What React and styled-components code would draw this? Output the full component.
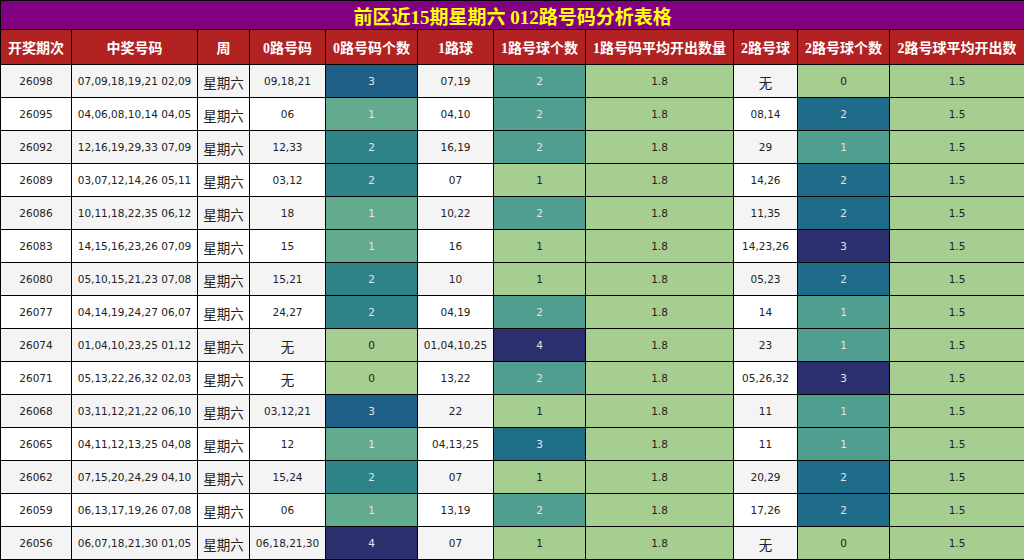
import React from 'react';
import styled, { createGlobalStyle } from 'styled-components';

const GlobalStyle = createGlobalStyle`
    body {
        margin: 0;
        background: #ffffff;
        font-family: "DejaVu Sans", "Noto Sans CJK SC", sans-serif;
    }
`;

const Table = styled.table`
    width: 1024px;
    table-layout: fixed;
    border-collapse: collapse;
    font-size: 10.5px;
    color: #222;
`;

const TitleCell = styled.th`
    height: 28px;
    padding: 0;
    border: 1px solid #000;
    background: #800080;
    color: #ffff00;
    font-family: "Liberation Serif", "Noto Sans CJK SC", serif;
    font-size: 19px;
    font-weight: bold;
    text-align: center;
    vertical-align: middle;
`;

const HeadCell = styled.th`
    height: 34px;
    padding: 0;
    border: 1px solid #000;
    background: #b22222;
    color: #ffffff;
    font-family: "Liberation Serif", "Noto Sans CJK SC", serif;
    font-size: 14px;
    font-weight: bold;
    white-space: nowrap;
    text-align: center;
`;

const Cell = styled.td`
    height: ${(p) => (p.$cjk ? '29px' : '32px')};
    padding: ${(p) => (p.$cjk ? '3px 0 0' : '0')};
    border: 1px solid #000;
    background: ${(p) => p.$bg || (p.$odd ? '#f4f4f4' : '#ffffff')};
    color: ${(p) => (p.$light ? '#e4e4e4' : '#222')};
    font-family: ${(p) => (p.$cjk ? '"Noto Sans CJK SC", sans-serif' : '"DejaVu Sans", sans-serif')};
    font-size: ${(p) => (p.$cjk ? '13.5px' : '10.5px')};
    line-height: 1.2;
    text-align: center;
    vertical-align: middle;
    white-space: nowrap;
`;

const widths = [71, 126, 52, 76, 92, 76, 92, 148, 64, 92, 135];

const headers = [
    '开奖期次', '中奖号码', '周', '0路号码', '0路号码个数', '1路球',
    '1路号球个数', '1路号码平均开出数量', '2路号球', '2路号球个数', '2路号球平均开出数',
];

const GREEN = '#a6ce91';

// colour scales, min -> max, per column
const scale0 = { 0: GREEN, 1: '#63ab8f', 2: '#2e8389', 3: '#1f5e87', 4: '#2c2f6e' };
const scale1 = { 1: GREEN, 2: '#509e8f', 3: '#1f6e88', 4: '#2c2f6e' };
const scale2 = { 0: GREEN, 1: '#509e8f', 2: '#1f6b8a', 3: '#2c2f6e' };

const rows = [
    ['26098', '07,09,18,19,21 02,09', '09,18,21', 3, '07,19', 2, '无', 0],
    ['26095', '04,06,08,10,14 04,05', '06', 1, '04,10', 2, '08,14', 2],
    ['26092', '12,16,19,29,33 07,09', '12,33', 2, '16,19', 2, '29', 1],
    ['26089', '03,07,12,14,26 05,11', '03,12', 2, '07', 1, '14,26', 2],
    ['26086', '10,11,18,22,35 06,12', '18', 1, '10,22', 2, '11,35', 2],
    ['26083', '14,15,16,23,26 07,09', '15', 1, '16', 1, '14,23,26', 3],
    ['26080', '05,10,15,21,23 07,08', '15,21', 2, '10', 1, '05,23', 2],
    ['26077', '04,14,19,24,27 06,07', '24,27', 2, '04,19', 2, '14', 1],
    ['26074', '01,04,10,23,25 01,12', '无', 0, '01,04,10,25', 4, '23', 1],
    ['26071', '05,13,22,26,32 02,03', '无', 0, '13,22', 2, '05,26,32', 3],
    ['26068', '03,11,12,21,22 06,10', '03,12,21', 3, '22', 1, '11', 1],
    ['26065', '04,11,12,13,25 04,08', '12', 1, '04,13,25', 3, '11', 1],
    ['26062', '07,15,20,24,29 04,10', '15,24', 2, '07', 1, '20,29', 2],
    ['26059', '06,13,17,19,26 07,08', '06', 1, '13,19', 2, '17,26', 2],
    ['26056', '06,07,18,21,30 01,05', '06,18,21,30', 4, '07', 1, '无', 0],
];

function CountCell({ value, scale }) {
    const bg = scale[value];
    return (
        <Cell $bg={bg} $light={bg !== GREEN}>
            {value}
        </Cell>
    );
}

function Balls({ value, odd }) {
    return (
        <Cell $odd={odd} $cjk={value === '无'}>
            {value}
        </Cell>
    );
}

export default function App() {
    return (
        <>
            <GlobalStyle />
            <Table>
                <colgroup>
                    {widths.map((w, i) => (
                        <col key={i} style={{ width: w }} />
                    ))}
                </colgroup>
                <thead>
                    <tr>
                        <TitleCell colSpan={11}>前区近15期星期六 012路号码分析表格</TitleCell>
                    </tr>
                    <tr>
                        {headers.map((h) => (
                            <HeadCell key={h}>{h}</HeadCell>
                        ))}
                    </tr>
                </thead>
                <tbody>
                    {rows.map((r, i) => {
                        const odd = i % 2 === 0;
                        return (
                            <tr key={r[0]}>
                                <Cell $odd={odd}>{r[0]}</Cell>
                                <Cell $odd={odd}>{r[1]}</Cell>
                                <Cell $odd={odd} $cjk>星期六</Cell>
                                <Balls value={r[2]} odd={odd} />
                                <CountCell value={r[3]} scale={scale0} />
                                <Balls value={r[4]} odd={odd} />
                                <CountCell value={r[5]} scale={scale1} />
                                <Cell $bg={GREEN}>1.8</Cell>
                                <Balls value={r[6]} odd={odd} />
                                <CountCell value={r[7]} scale={scale2} />
                                <Cell $bg={GREEN}>1.5</Cell>
                            </tr>
                        );
                    })}
                </tbody>
            </Table>
        </>
    );
}
